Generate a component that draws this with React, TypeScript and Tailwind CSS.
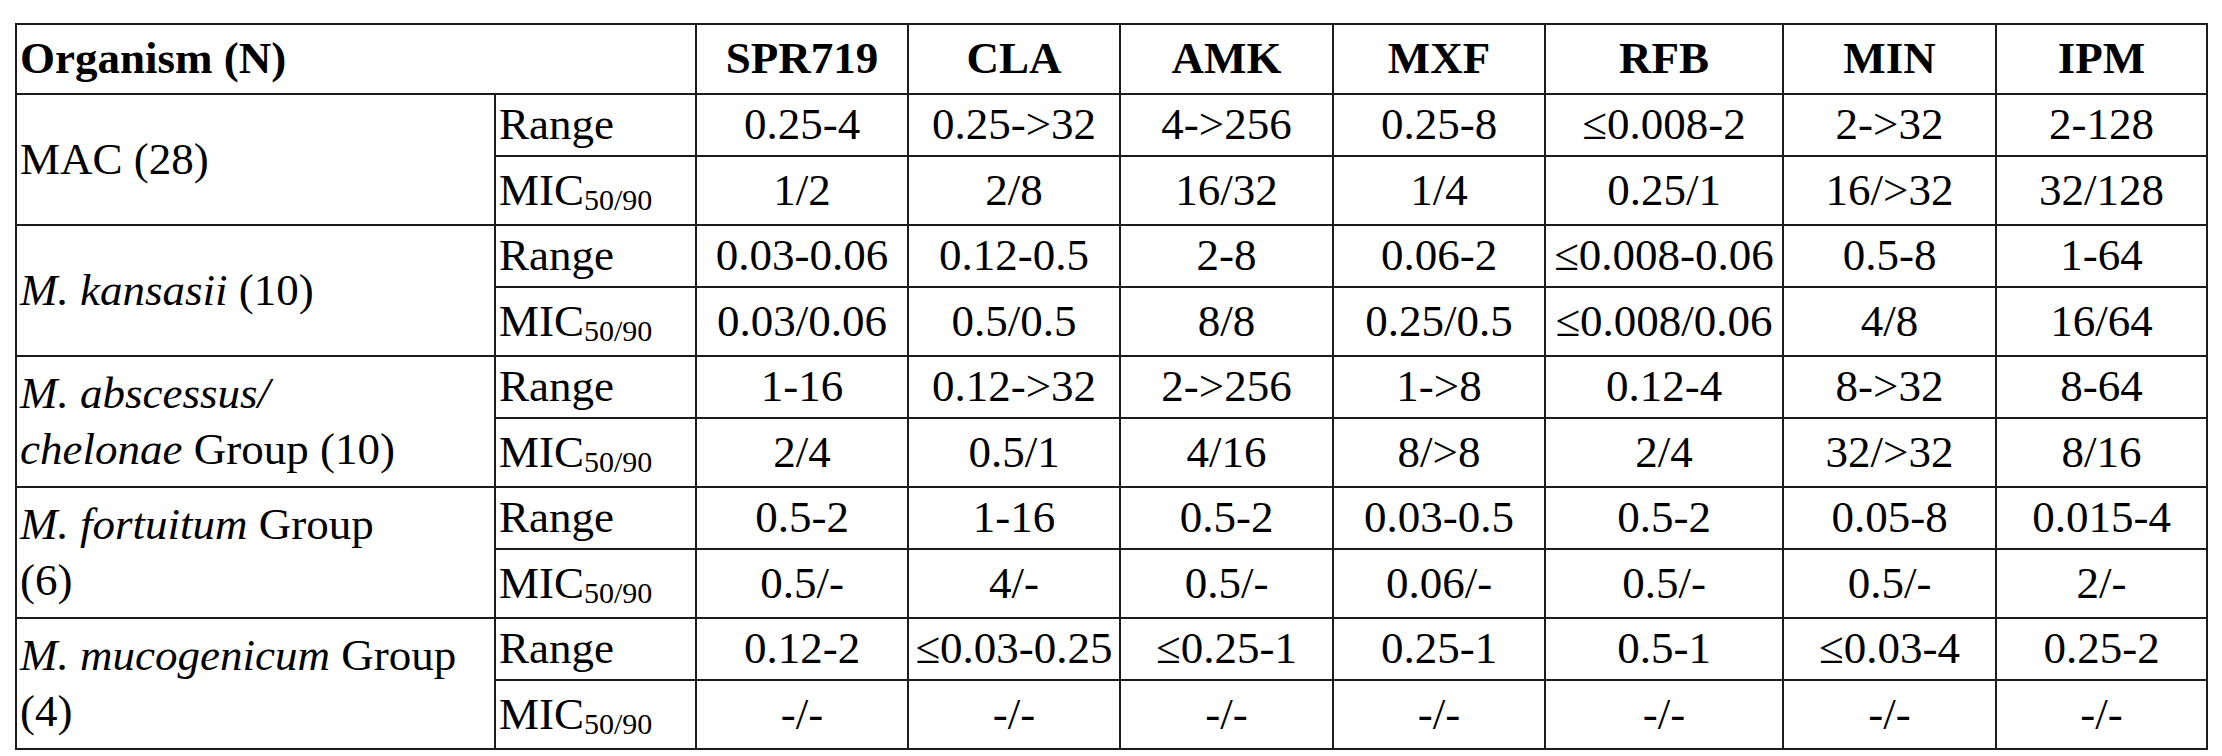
import React from 'react';

type Row = {
  name: React.ReactNode;
  range: string[];
  mic: string[];
};

const DRUGS = ['SPR719', 'CLA', 'AMK', 'MXF', 'RFB', 'MIN', 'IPM'];

const ROWS: Row[] = [
  {
    name: <>MAC (28)</>,
    range: ['0.25-4', '0.25->32', '4->256', '0.25-8', '≤0.008-2', '2->32', '2-128'],
    mic: ['1/2', '2/8', '16/32', '1/4', '0.25/1', '16/>32', '32/128'],
  },
  {
    name: (
      <>
        <i>M. kansasii</i> (10)
      </>
    ),
    range: ['0.03-0.06', '0.12-0.5', '2-8', '0.06-2', '≤0.008-0.06', '0.5-8', '1-64'],
    mic: ['0.03/0.06', '0.5/0.5', '8/8', '0.25/0.5', '≤0.008/0.06', '4/8', '16/64'],
  },
  {
    name: (
      <>
        <i>M. abscessus/</i>
        <br />
        <i>chelonae</i> Group (10)
      </>
    ),
    range: ['1-16', '0.12->32', '2->256', '1->8', '0.12-4', '8->32', '8-64'],
    mic: ['2/4', '0.5/1', '4/16', '8/>8', '2/4', '32/>32', '8/16'],
  },
  {
    name: (
      <>
        <i>M. fortuitum</i> Group
        <br />
        (6)
      </>
    ),
    range: ['0.5-2', '1-16', '0.5-2', '0.03-0.5', '0.5-2', '0.05-8', '0.015-4'],
    mic: ['0.5/-', '4/-', '0.5/-', '0.06/-', '0.5/-', '0.5/-', '2/-'],
  },
  {
    name: (
      <>
        <i>M. mucogenicum</i> Group
        <br />
        (4)
      </>
    ),
    range: ['0.12-2', '≤0.03-0.25', '≤0.25-1', '0.25-1', '0.5-1', '≤0.03-4', '0.25-2'],
    mic: ['-/-', '-/-', '-/-', '-/-', '-/-', '-/-', '-/-'],
  },
];

const cell = 'border-2 border-[#1c1c1c] p-0';

export default function App() {
  return (
    <div className="w-[2222px] h-[756px] bg-white pt-[23px] pl-[15px] font-serif text-black text-[45px]">
      <table className="border-collapse table-fixed w-[2193px] font-[Liberation_Serif]">
        <colgroup>
          <col className="w-[479px]" />
          <col className="w-[201px]" />
          <col className="w-[212px]" />
          <col className="w-[212px]" />
          <col className="w-[213px]" />
          <col className="w-[212px]" />
          <col className="w-[238px]" />
          <col className="w-[213px]" />
          <col className="w-[211px]" />
        </colgroup>
        <thead>
          <tr className="h-[63px]">
            <th colSpan={2} className={`${cell} text-left pl-[3px] align-middle font-bold`}>
              Organism (N)
            </th>
            {DRUGS.map((d) => (
              <th key={d} className={`${cell} text-center align-middle font-bold`}>
                {d}
              </th>
            ))}
          </tr>
        </thead>
        <tbody>
          {ROWS.map((row, i) => (
            <React.Fragment key={i}>
              <tr className="h-[62px]">
                <td rowSpan={2} className={`${cell} pl-[3px] align-middle leading-[56px]`}>
                  {row.name}
                </td>
                <td className={`${cell} pl-[3px] align-middle leading-none`}>Range</td>
                {row.range.map((v, j) => (
                  <td key={j} className={`${cell} text-center align-middle leading-none whitespace-nowrap`}>
                    {v}
                  </td>
                ))}
              </tr>
              <tr className="h-[69px]">
                <td className={`${cell} pl-[3px] align-middle leading-none whitespace-nowrap`}>
                  MIC<sub className="text-[30px] bottom-[-5px]">50/90</sub>
                </td>
                {row.mic.map((v, j) => (
                  <td key={j} className={`${cell} text-center align-middle leading-none whitespace-nowrap`}>
                    {v}
                  </td>
                ))}
              </tr>
            </React.Fragment>
          ))}
        </tbody>
      </table>
    </div>
  );
}
